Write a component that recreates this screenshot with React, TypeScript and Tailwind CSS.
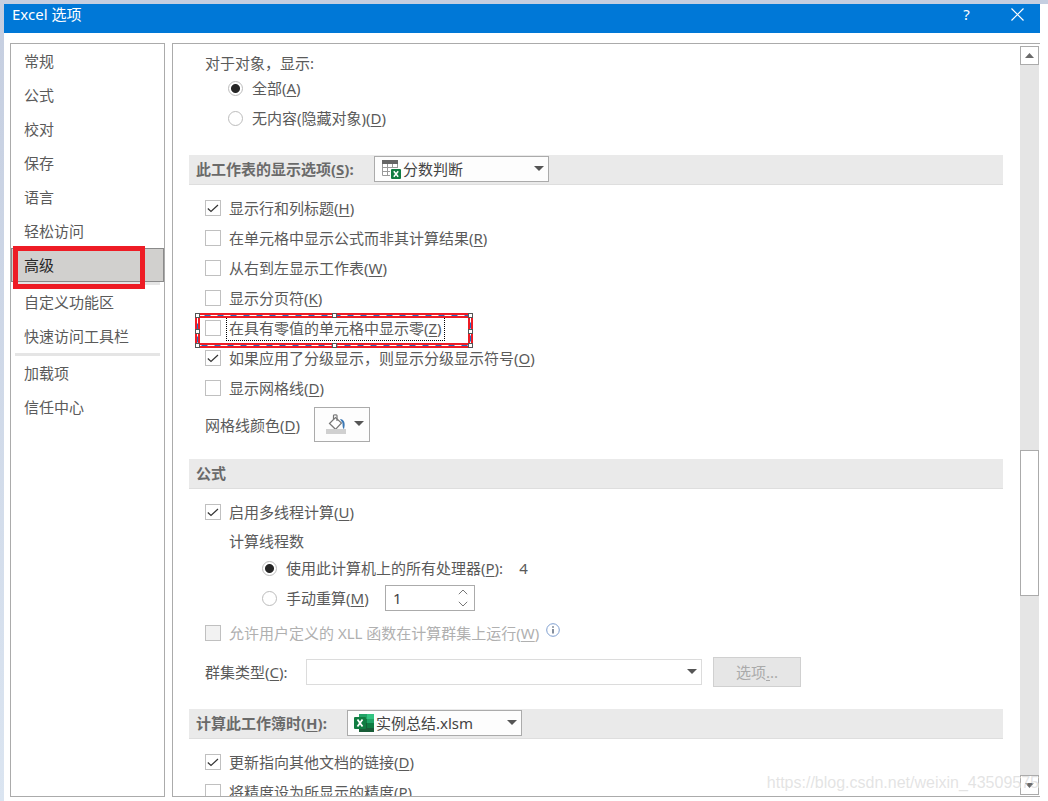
import { useState, type ReactNode } from 'react';

const categories = [
  ['常规', '公式', '校对', '保存', '语言', '轻松访问', '高级'],
  ['自定义功能区', '快速访问工具栏'],
  ['加载项', '信任中心'],
];

export default function App() {
  const [category, setCategory] = useState('高级');
  const [objects, setObjects] = useState('all');
  const [threads, setThreads] = useState('auto');
  const [count, setCount] = useState(1);

  return (
    <div className="flex h-screen flex-col overflow-hidden bg-linear-to-b from-[#c5cee0] to-[#dbe5f1] pl-1 pt-1 font-['Noto_Sans','Noto_Sans_CJK_SC',sans-serif] text-[15px] leading-5 text-[#5a5a5a] [&_u]:underline-offset-2">
      <div className="flex min-h-0 flex-1 flex-col bg-white pr-2">
        <header className="flex h-[29px] shrink-0 items-start bg-[#0078d7] pl-2 text-white">
          <h1 className="flex-1">Excel 选项</h1>
          <button type="button" aria-label="帮助" className="flex h-5 w-[57px] items-center justify-center text-[15px]">?</button>
          <button type="button" aria-label="关闭" className="flex h-5 w-[45px] shrink-0 items-center justify-center">
            <svg width="13" height="13" viewBox="0 0 13 13" stroke="currentColor" strokeWidth="1.200"><path d="M.5.5l12 12M12.5.5l-12 12" /></svg>
          </button>
        </header>

        <div className="flex min-h-0 flex-1 gap-[7px] pb-1 pl-1.5 pt-2.5">
          <nav className="w-[155px] shrink-0 border border-[#ababab]">
            {categories.map((group, i) => (
              <div key={i}>
                {i > 0 && <div className="mx-1 h-[3px] bg-[#e5e5e5]" />}
                {group.map((name) => (
                  <button
                    key={name}
                    type="button"
                    onClick={() => setCategory(name)}
                    className={`relative flex h-[34px] w-full items-center border px-3 ${category === name ? 'border-[#8a8a8a] bg-[#d1d0ce] text-[#262626]' : 'border-transparent'}`}
                  >
                    {name}
                    {name === '高级' && <span className="absolute -top-[3px] left-px h-[43px] w-[132px] border-[5px] border-[#ee1c25]" />}
                  </button>
                ))}
              </div>
            ))}
          </nav>

          <main className="relative flex min-w-0 flex-1 border-y border-l border-[#ababab]">
            <div className="min-w-0 flex-1 overflow-hidden pl-4 pr-[17px] pt-[9px]">
              <p className="h-5 pl-4">对于对象，显示:</p>
              <div className="pl-[39px]">
                <Radio name="objects" checked={objects === 'all'} onChange={() => setObjects('all')}>全部(<u>A</u>)</Radio>
                <Radio name="objects" checked={objects === 'none'} onChange={() => setObjects('none')}>无内容(隐藏对象)(<u>D</u>)</Radio>
              </div>

              <SectionBar className="mt-[22px]">
                <label htmlFor="sheet" className="w-[178px]">此工作表的显示选项(<u>S</u>):</label>
                <Picker id="sheet" value="分数判断" icon={<SheetIcon />} />
              </SectionBar>
              <div className="pl-4 pt-2">
                <Check defaultChecked>显示行和列标题(<u>H</u>)</Check>
                <Check>在单元格中显示公式而非其计算结果(<u>R</u>)</Check>
                <Check>从右到左显示工作表(<u>W</u>)</Check>
                <Check>显示分页符(<u>K</u>)</Check>
                <div className="relative w-fit">
                  <Check focused>在具有零值的单元格中显示零(<u>Z</u>)</Check>
                  <SelectionFrame />
                </div>
                <Check defaultChecked>如果应用了分级显示，则显示分级显示符号(<u>O</u>)</Check>
                <Check>显示网格线(<u>D</u>)</Check>
                <div className="mt-1 flex h-[35px] items-center">
                  <label htmlFor="gridcolor" className="w-[109px]">网格线颜色(<u>D</u>)</label>
                  <button id="gridcolor" type="button" className="flex h-[35px] w-14 items-center justify-between border border-[#ababab] bg-[#fdfdfd] pb-0.5 pl-[11px] pr-[5px]">
                    <BucketIcon />
                    <Arrow />
                  </button>
                </div>
              </div>

              <SectionBar className="mt-[17px]">公式</SectionBar>
              <div className="pl-4 pt-2">
                <Check defaultChecked>启用多线程计算(<u>U</u>)</Check>
                <p className="h-[26px] pl-6 pt-1">计算线程数</p>
                <div className="pl-[57px]">
                  <Radio name="threads" checked={threads === 'auto'} onChange={() => setThreads('auto')}>
                    使用此计算机上的所有处理器(<u>P</u>):<span className="ml-4">4</span>
                  </Radio>
                  <div className="flex items-center">
                    <div className="w-[123px]">
                      <Radio name="threads" checked={threads === 'manual'} onChange={() => setThreads('manual')}>手动重算(<u>M</u>)</Radio>
                    </div>
                    <div className="flex h-[26px] w-[90px] border border-[#ababab] text-[#444]">
                      <input
                        aria-label="线程数"
                        value={count}
                        onChange={(e) => setCount(Number(e.target.value) || 1)}
                        className="min-w-0 flex-1 pl-[7px] outline-none"
                      />
                      <div className="flex w-[22px] flex-col">
                        <button type="button" aria-label="增加" onClick={() => setCount(count + 1)} className="flex flex-1 items-center justify-center">
                          <svg width="10" height="6" viewBox="0 0 10 6" fill="none" stroke="#777"><path d="M.8 5.200L5 1l4.200 4.200" /></svg>
                        </button>
                        <button type="button" aria-label="减少" onClick={() => setCount(Math.max(1, count - 1))} className="flex flex-1 items-center justify-center">
                          <svg width="10" height="6" viewBox="0 0 10 6" fill="none" stroke="#777"><path d="M.8.8L5 5 9.200.8" /></svg>
                        </button>
                      </div>
                    </div>
                  </div>
                </div>
                <div className="mt-[5px] flex">
                  <Check disabled>允许用户定义的 XLL 函数在计算群集上运行(<u>W</u>)</Check>
                  <svg className="ml-[7px] mt-[5px]" width="14" height="14" viewBox="0 0 14 14" fill="none">
                    <circle cx="7" cy="7" r="6.300" stroke="#7f9fd0" />
                    <path d="M7 6v4.500M7 3.200v1.500" stroke="#44546a" strokeWidth="1.300" />
                  </svg>
                </div>
                <div className="mt-[9px] flex h-[30px] items-center">
                  <label htmlFor="cluster" className="w-[101px]">群集类型(<u>C</u>):</label>
                  <div className="relative w-[396px]">
                    <select id="cluster" className="block h-[26px] w-full appearance-none border border-[#dcdcdc] bg-white" />
                    <Arrow className="pointer-events-none absolute right-[5px] top-2.5" />
                  </div>
                  <button type="button" disabled className="ml-[11px] h-[30px] w-[88px] border border-[#d0d0d0] bg-[#e6e6e6] text-[#aaa]">
                    选项<u>.</u>..
                  </button>
                </div>
              </div>

              <SectionBar className="mt-[22px]">
                <label htmlFor="book" className="w-[151px]">计算此工作簿时(<u>H</u>):</label>
                <Picker id="book" value="实例总结.xlsm" icon={<ExcelIcon />} />
              </SectionBar>
              <div className="pl-4 pt-2">
                <Check defaultChecked>更新指向其他文档的链接(<u>D</u>)</Check>
                <Check>将精度设为所显示的精度(<u>P</u>)</Check>
              </div>
            </div>

            <div className="mr-px mt-0.5 mb-px flex w-[19px] shrink-0 flex-col bg-[#e5e5e5]">
              <button type="button" aria-label="向上滚动" className="flex h-[19px] items-center justify-center border border-[#ababab] bg-white">
                <svg width="9" height="5" viewBox="0 0 9 5" fill="#6a6a6a"><path d="M0 5l4.500-5L9 5z" /></svg>
              </button>
              <div className="grow-[385]" />
              <div className="h-[146px] border border-[#ababab] bg-white" />
              <div className="grow-[179]" />
              <button type="button" aria-label="向下滚动" className="flex h-5 items-center justify-center border border-[#ababab] bg-white">
                <svg width="9" height="5" viewBox="0 0 9 5" fill="#6a6a6a"><path d="M0 0l4.500 5L9 0z" /></svg>
              </button>
            </div>

            <span className="pointer-events-none absolute bottom-[3px] right-px font-['Liberation_Sans',Arial,sans-serif] text-base leading-5 text-[#c8c8c8]/50 [text-shadow:1px_1px_0_#ffffff80]">
              https://blog.csdn.net/weixin_43509575
            </span>
          </main>
        </div>
      </div>
    </div>
  );
}

function SectionBar({ className, children }: { className: string; children: ReactNode }) {
  return (
    <h2 className={`flex h-[30px] items-center border-b border-[#dedede] bg-[#eaeaea] pb-0.5 pl-[7px] font-bold text-[#6a6a6a] ${className}`}>
      {children}
    </h2>
  );
}

function Check({ children, defaultChecked, disabled, focused }: { children: ReactNode; defaultChecked?: boolean; disabled?: boolean; focused?: boolean }) {
  return (
    <label className={`relative flex h-[30px] w-fit items-center gap-2 ${disabled ? 'text-[#b0b0b0]' : ''}`}>
      <input
        type="checkbox"
        defaultChecked={defaultChecked}
        disabled={disabled}
        className="peer size-4 shrink-0 appearance-none border border-[#c0c0c0] bg-white disabled:bg-[#f2f2f2]"
      />
      <svg className="pointer-events-none absolute left-0.5 top-[9px] hidden peer-checked:block" width="12" height="12" viewBox="0 0 12 12" fill="none" stroke="#333" strokeWidth="1.200">
        <path d="M.8 6.500L4 9.500 11 3" />
      </svg>
      <span className={focused ? 'outline-1 outline-offset-2 outline-dotted outline-black' : ''}>{children}</span>
    </label>
  );
}

function Radio({ name, checked, onChange, children }: { name: string; checked: boolean; onChange: () => void; children: ReactNode }) {
  return (
    <label className="flex h-[30px] w-fit items-center gap-[9px]">
      <input
        type="radio"
        name={name}
        checked={checked}
        onChange={onChange}
        className="size-[15px] shrink-0 appearance-none rounded-full border border-[#bcbcbc] bg-white checked:bg-[radial-gradient(circle,#262626_4px,#fff_5px)]"
      />
      <span>{children}</span>
    </label>
  );
}

function Picker({ id, value, icon }: { id: string; value: string; icon: ReactNode }) {
  return (
    <div className="relative w-[175px] font-normal text-[#444]">
      <select id={id} className="block h-[26px] w-full appearance-none border border-[#ababab] bg-[#fdfdfd] pl-7">
        <option>{value}</option>
      </select>
      <span className="pointer-events-none absolute left-[7px] top-1">{icon}</span>
      <Arrow className="pointer-events-none absolute right-[5px] top-2.5" />
    </div>
  );
}

function Arrow({ className }: { className?: string }) {
  return (
    <svg className={className} width="10" height="5" viewBox="0 0 10 5" fill="#555"><path d="M0 0h10L5 5z" /></svg>
  );
}

// Red drawing frame with its dashed selection line and resize handles
function SelectionFrame() {
  return (
    <svg className="pointer-events-none absolute -left-2.5 top-0" width="278" height="35" viewBox="0 0 278 35" fill="none">
      <rect x="2.500" y="2.500" width="273" height="30" stroke="#ee1c25" strokeWidth="5" />
      <rect x="2.500" y="2.500" width="273" height="30" stroke="#1f6fc4" />
      <rect x="2.500" y="2.500" width="273" height="30" stroke="#fff" strokeDasharray="7 6" />
      {[2.5, 139.5, 275.5].map((x) =>
        [2.5, 18.5, 32.5].map((y) =>
          x === 139.5 && y === 18.5 ? null : (
            <rect key={`${x}-${y}`} x={x - 2} y={y - 2} width="4" height="4" fill="#fff" stroke="#555" />
          )
        )
      )}
    </svg>
  );
}

function SheetIcon() {
  return (
    <svg width="20" height="20" viewBox="0 0 20 20">
      <path d="M1 1h16v14H1z" fill="#fff" />
      <path d="M1.500 3v12.500H17M1 7.500h16M1 11.500h16M6.500 4v11M11.500 4v11M16.500 4v11" stroke="#999" fill="none" />
      <path d="M1 0h16v4H1z" fill="#666" />
      <rect x="9" y="8" width="11" height="12" fill="#fdfdfd" />
      <rect x="10" y="9" width="10" height="10" rx="1" fill="#107c41" />
      <path d="M12.800 11.200l4.400 5.600M17.200 11.200l-4.400 5.600" stroke="#fff" strokeWidth="1.500" />
    </svg>
  );
}

function ExcelIcon() {
  return (
    <svg width="20" height="18" viewBox="0 0 20 18">
      <path d="M5 0h8v5H5z" fill="#21a366" />
      <path d="M13 0h7v5h-7z" fill="#33c481" />
      <path d="M5 5h8v4H5z" fill="#107c41" />
      <path d="M13 5h7v4h-7z" fill="#21a366" />
      <path d="M5 9h8v5H5z" fill="#185c37" />
      <path d="M13 9h7v5h-7z" fill="#107c41" />
      <path d="M5 14h15v4H5z" fill="#185c37" />
      <rect x="0" y="3" width="12" height="12" rx="1" fill="#107c41" />
      <path d="M3.500 5.500l5 7M8.500 5.500l-5 7" stroke="#fff" strokeWidth="1.800" />
    </svg>
  );
}

function BucketIcon() {
  return (
    <svg width="20" height="20" viewBox="0 0 20 20" fill="none">
      <path d="M3.500 9.500L9.500 3.500l6 5.500-6 6.300z" fill="#fff" stroke="#777" strokeWidth="1.200" />
      <path d="M7.500 6V1.500c0-1 3.500-1 3.500 0V7" stroke="#777" strokeWidth="1.200" />
      <path d="M14 5c4 .2 5.800 4 4 10-1.200-.5-1.500-2-1.500-6z" fill="#3c78b4" />
      <path d="M0 15h20v5H0z" fill="#d0d0d0" />
    </svg>
  );
}
